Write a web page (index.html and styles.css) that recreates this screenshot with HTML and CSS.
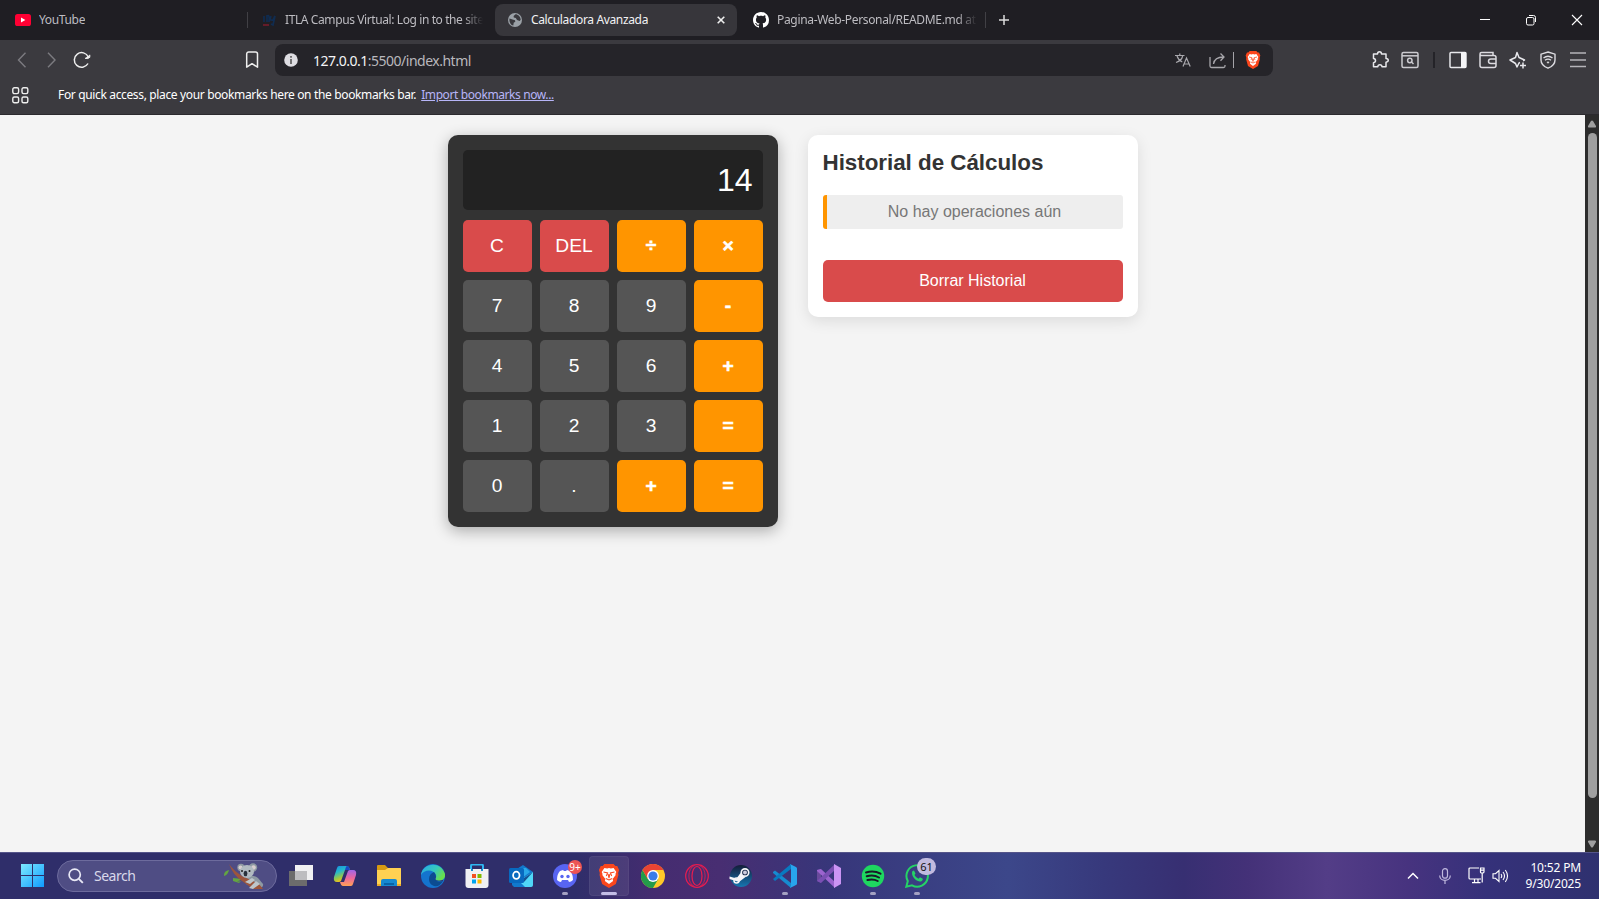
FILE: index.html
```html
<!DOCTYPE html>
<html lang="es">
<head>
<meta charset="utf-8">
<title>Calculadora Avanzada</title>
<link rel="stylesheet" href="styles.css">
</head>
<body>
<div class="desktop">
  <header class="tabs">
    <div class="tab tab-youtube">
      <svg width="16" height="12" viewBox="0 0 16 12"><rect width="16" height="12" rx="2.6" fill="#f03"/><path d="M6 3.4v5.2L10.4 6z" fill="#fff"/></svg>
      <span class="tab-title t-youtube">YouTube</span>
    </div>
    <i class="tab-sep"></i>
    <div class="tab tab-itla">
      <svg width="16" height="14" viewBox="0 0 16 14"><path d="M2 9V3M5 9V2M5 3q3-2 2 6M9 3q-2 5 2 4l2-4-2 9-2-1" fill="none" stroke="#102c50" stroke-width="1.7"/><path d="M1 11h6v2H1z" fill="#641b29"/></svg>
      <span class="tab-title t-itla faded">ITLA Campus Virtual: Log in to the site</span>
    </div>
    <div class="tab tab-active">
      <svg width="14" height="14" viewBox="0 0 14 14"><circle cx="7" cy="7" r="7" fill="#9aa0a6"/><path d="M1.500 5.500 4.500 6.500l2.500.7.300 1.600-1.600 1-.4 2.600C2.500 12 1 9 1.500 5.500zM7.500 1.200 5.600 3l.2 1.500 2 .5L9 7l2.700 1 1-1.200C12.600 3.500 10 1.200 7.500 1.200z" fill="#39383d"/></svg>
      <span class="tab-title t-active">Calculadora Avanzada</span>
      <svg class="tab-close" width="8" height="8" viewBox="0 0 8 8"><path d="m.7.7 6.600 6.600m0-6.600L.7 7.300" stroke="#eee" stroke-width="1.600"/></svg>
    </div>
    <div class="tab tab-github">
      <svg width="16" height="16" viewBox="0 0 16 16"><path fill="#fff" d="M8 0C3.580 0 0 3.580 0 8c0 3.540 2.290 6.530 5.470 7.590.4.070.55-.17.55-.38 0-.19-.01-.82-.01-1.490-2.010.37-2.530-.49-2.690-.94-.09-.23-.48-.94-.82-1.130-.28-.15-.68-.52-.01-.53.63-.01 1.080.58 1.230.82.72 1.210 1.870.87 2.330.66.070-.52.28-.87.510-1.070-1.780-.2-3.640-.89-3.640-3.950 0-.87.310-1.590.82-2.150-.08-.2-.36-1.020.08-2.120 0 0 .67-.21 2.200.82.640-.18 1.320-.27 2-.27s1.360.09 2 .27c1.530-1.040 2.200-.82 2.200-.82.44 1.100.16 1.920.08 2.120.51.56.82 1.270.82 2.150 0 3.070-1.870 3.750-3.650 3.950.29.25.54.73.54 1.480 0 1.070-.01 1.930-.01 2.200 0 .21.15.46.55.38A8.010 8.010 0 0 0 16 8c0-4.420-3.580-8-8-8z"/></svg>
      <span class="tab-title t-github faded">Pagina-Web-Personal/README.md at</span>
    </div>
    <i class="tab-sep"></i>
    <svg class="new-tab" width="10" height="10" viewBox="0 0 10 10"><path d="M5 0v10M0 5h10" stroke="#ddd" stroke-width="1.500"/></svg>
    <div class="window-controls">
      <svg width="12" height="12" viewBox="0 0 12 12"><path d="M1 5.500h10" stroke="#fff"/></svg>
      <svg width="12" height="12" viewBox="0 0 12 12" fill="none" stroke="#fff"><rect x="1.500" y="3.500" width="7.500" height="7.500" rx="1.500"/><path d="M4 1.500h4.500a2 2 0 0 1 2 2V8"/></svg>
      <svg width="12" height="12" viewBox="0 0 12 12"><path d="m1 1 10 10m0-10L1 11" stroke="#fff" stroke-width="1.100"/></svg>
    </div>
  </header>

  <div class="chrome-bars">
    <nav class="toolbar">
      <svg class="nav-back" width="10" height="16" viewBox="0 0 10 16"><path d="M8.500.8 1.500 8l7 7.200" fill="none" stroke="#7c7b80" stroke-width="1.400"/></svg>
      <svg class="nav-fwd" width="10" height="16" viewBox="0 0 10 16"><path d="m1 .8 7 7.200-7 7.200" fill="none" stroke="#7c7b80" stroke-width="1.400"/></svg>
      <svg class="nav-reload" width="18" height="18" viewBox="0 0 18 18"><path d="M15 12.500A7.300 7.300 0 1 1 15.300 6" fill="none" stroke="#eee" stroke-width="1.500"/><path d="M12 7.300q3 1 4.800-1V3.800" fill="#eee" stroke="#eee"/></svg>
      <svg class="nav-mark" width="14" height="18" viewBox="0 0 14 18"><path d="M1.700 16.200V3a2 2 0 0 1 2-2h6.800a2 2 0 0 1 2 2v13.200L7 12.700z" fill="none" stroke="#eee" stroke-width="1.500" stroke-linejoin="round"/></svg>
      <div class="address">
        <svg width="14" height="14" viewBox="0 0 14 14"><circle cx="7" cy="7" r="6.800" fill="#dedde2"/><path d="M6.200 6h1.600v5H6.200zM6.200 3h1.600v1.800H6.200z" fill="#555"/></svg>
        <span class="url"><b>127.0.0.1</b>:5500/index.html</span>
        <svg class="translate" width="16" height="16" viewBox="0 0 16 16" fill="none" stroke="#a8a7ac" stroke-width="1.200"><path d="M0 3.500h9.500M4.800 1.500v2M2 4c1 3 3 5 5.300 6M7.700 4C7 7 4 9.500 1 10.500M8 14.500l3.500-8.500 3.700 8.500M9.300 12h4.700"/></svg>
        <svg class="share" width="17" height="17" viewBox="0 0 17 17" fill="none" stroke="#a8a7ac" stroke-width="1.300"><path d="M1 5v9q0 1.500 1.500 1.500h12q1.500 0 1.500-1.500v-1M4.500 12q1-7 10-7M11.500 1.500 15 5l-3.500 3.700"/></svg>
        <i class="address-sep"></i>
        <svg class="shield" width="16" height="18" viewBox="0 0 24 24" preserveAspectRatio="none"><use href="#brave"/></svg>
      </div>
      <div class="actions">
        <svg width="18" height="18" viewBox="0 0 18 18" fill="none" stroke="#e8e8ec" stroke-width="1.500" stroke-linejoin="round"><path d="M2.500 3h4c0-3 4-3 4 0H15v4.500c3 .2 3 3.500 0 3.700v4.500h-4c-.2-2.500-4-2.500-4.200 0H2.500v-4c2.700-.2 2.700-4 0-4.200z"/></svg>
        <svg width="18" height="18" viewBox="0 0 18 18" fill="none" stroke="#cccbd0" stroke-width="1.500"><rect x="1" y="1.500" width="16" height="15" rx="1.500"/><path d="M1 4.800h16"/><circle cx="8.800" cy="9.500" r="2.200"/><path d="m10.500 11 2 2"/></svg>
        <i class="actions-sep"></i>
        <svg width="18" height="18" viewBox="0 0 18 18"><rect x="1" y="1.500" width="16" height="15" rx="1" fill="none" stroke="#e8e8ec" stroke-width="1.500"/><path d="M12 1h5v16h-5z" fill="#f4f4f6"/></svg>
        <svg width="18" height="18" viewBox="0 0 18 18" fill="none" stroke="#dddce1" stroke-width="1.500"><path d="M1 3.500v11q0 2 2 2h12q2 0 2-2v-8q0-2-2-2H2.500Q1 4.500 1 3t1.500-1.500H14v3M17 8h-5q-2.500 0-2.500 2.200T12 12.500h5"/></svg>
        <svg width="18" height="18" viewBox="0 0 18 18" fill="none" stroke="#e8e8ec" stroke-width="1.500" stroke-linejoin="round"><path d="M11 11.500 10 12l-2 4-1.500-3.500L1 9l5.500-2.500L8 1.500l2 5L15.500 9l-1.500.7M14 11.500v6M11 14.500h6"/></svg>
        <svg width="18" height="18" viewBox="0 0 18 18" fill="none" stroke="#dddce1" stroke-width="1.400"><path d="M9 1 16 3.200V9q0 5.500-7 8.200Q2 14.500 2 9V3.200z"/><path d="M4.500 7q4.500-3.500 9 0M6 9.300q3-2.300 6 0"/><path d="m7.500 11 1.500-.6 1.500.6L9 12.800z" fill="#ddd" stroke="none"/></svg>
        <svg width="18" height="18" viewBox="0 0 18 18"><path d="M1 2h16M1 9h16M1 15.500h16" stroke="#b5b4b9" stroke-width="1.600"/></svg>
      </div>
    </nav>
    <div class="bookmarks">
      <svg width="17" height="17" viewBox="0 0 17 17" fill="none" stroke="#eee" stroke-width="1.400"><rect x=".8" y=".8" width="5.800" height="5.800" rx="1.500"/><rect x="10" y=".8" width="5.800" height="5.800" rx="1.500"/><rect x=".8" y="10" width="5.800" height="5.800" rx="1.500"/><rect x="10" y="10" width="5.800" height="5.800" rx="1.500"/></svg>
      <span class="bm-text">For quick access, place your bookmarks here on the bookmarks bar.</span>
      <a class="bm-link">Import bookmarks now...</a>
    </div>
  </div>

  <div class="viewport">
    <main class="page">
      <section class="calculator">
        <div class="display">14</div>
        <div class="keys">
          <button class="key clear">C</button><button class="key clear">DEL</button><button class="key op">÷</button><button class="key op">×</button>
          <button class="key">7</button><button class="key">8</button><button class="key">9</button><button class="key op">-</button>
          <button class="key">4</button><button class="key">5</button><button class="key">6</button><button class="key op">+</button>
          <button class="key">1</button><button class="key">2</button><button class="key">3</button><button class="key op">=</button>
          <button class="key">0</button><button class="key">.</button><button class="key op">+</button><button class="key op">=</button>
        </div>
      </section>
      <section class="history">
        <h2>Historial de Cálculos</h2>
        <div class="entry">No hay operaciones aún</div>
        <button class="erase">Borrar Historial</button>
      </section>
    </main>
    <div class="scrollbar">
      <svg width="10" height="8" viewBox="0 0 10 8"><path d="M4 1q1-1 2 0l3 5q.5 1.500-1 1.500H2Q.5 7.500 1 6z" fill="#9f9f9f"/></svg>
      <div class="thumb"></div>
      <svg width="10" height="8" viewBox="0 0 10 8"><path d="M4 7q1 1 2 0l3-5q.5-1.500-1-1.500H2Q.5.500 1 2z" fill="#9f9f9f"/></svg>
    </div>
  </div>

  <footer class="taskbar">
    <svg class="start" width="23" height="23" viewBox="0 0 23 23"><defs><linearGradient id="win" x2="1" y2="1" gradientUnits="userSpaceOnUse" gradientTransform="scale(23)"><stop stop-color="#7deaff"/><stop offset="1" stop-color="#0f9bff"/></linearGradient></defs><path d="M0 0h11v11H0zM12 0h11v11H12zM0 12h11v11H0zM12 12h11v11H12z" fill="url(#win)"/></svg>
    <div class="search">
      <svg width="16" height="16" viewBox="0 0 16 16"><circle cx="6.700" cy="6.700" r="5.600" fill="none" stroke="#e8e8f5" stroke-width="1.700"/><path d="m10.800 10.800 4 4" stroke="#e8e8f5" stroke-width="1.900"/></svg>
      <span>Search</span>
      <svg class="koala" width="42" height="26" viewBox="0 0 42 26">
        <path d="M1 12q0-4 5-5-1 5-5 6zM10 15l9 1-5 3 4-1-2 2-6-2z" fill="#63a541"/>
        <path d="M23 14q7-3 12 1l5 6q1 4-5 4l-12-4z" fill="#8d99a3"/>
        <path d="M6 1q5 7 13 12l17 8 4 5H30L19 18Q10 12 6 1z" fill="#9c553c"/>
        <circle cx="18" cy="4.500" r="3.700" fill="#8e99a2"/><circle cx="30" cy="4.500" r="4.200" fill="#8e99a2"/><circle cx="17.500" cy="4.500" r="2" fill="#d9cfd0"/><circle cx="30.500" cy="4.500" r="2.300" fill="#d9cfd0"/>
        <ellipse cx="24" cy="8.500" rx="7" ry="6.500" fill="#b1bac1"/><ellipse cx="22.500" cy="10.500" rx="1.900" ry="2.700" fill="#29313b"/><circle cx="19" cy="8" r="1" fill="#222"/><circle cx="26.500" cy="8" r="1" fill="#222"/>
        <path d="m22 19 7-4 3 2-5 4zM26 25l7-7 4 3-7 5z" fill="#bdc6cb"/>
      </svg>
    </div>
    <div class="apps">
      <div class="app"><svg width="24" height="24" viewBox="0 0 24 24"><path d="M0 7h18v15H0z" fill="#6c6c6c"/><path d="M6 1h18v15H6z" fill="#f0f0f2"/><path d="M6 7h12v9H6z" fill="#bdbdc0"/></svg></div>
      <div class="app"><svg width="24" height="24" viewBox="0 0 24 24"><defs><linearGradient id="cpa" x2=".4" y2="1"><stop stop-color="#168ce5"/><stop offset=".4" stop-color="#25b9cb"/><stop offset=".75" stop-color="#9bc944"/><stop offset="1" stop-color="#ffbd18"/></linearGradient><linearGradient id="cpb" x2="0" y2="1"><stop stop-color="#9f65e8"/><stop offset=".5" stop-color="#ec669e"/><stop offset="1" stop-color="#ffa254"/></linearGradient></defs><path d="M6 2h8q2 0 3 4l-5 0-4 11q-1 1-2 1H4q-4 0-3-5L4 4q.5-2 2-2z" fill="url(#cpa)"/><path d="M14 2q2 0 3 4H12q1-4 2-4z" fill="#1948c5"/><path d="M18 22h-8q-2 0-3-4h4l4-11q1-1 2-1h3q4 0 3 5l-3 9q-.5 2-2 2z" fill="url(#cpb)"/></svg></div>
      <div class="app"><svg width="24" height="24" viewBox="0 0 24 24"><path d="M0 2q0-1 1-1h7l3 3h12q1 0 1 1v3H0z" fill="#d79b12"/><path d="M0 6h8l3-2h12q1 0 1 1v17H0z" fill="#ffd152"/><path d="M0 20h24v2H0z" fill="#edac28"/><path d="M4 22v-5q0-2 2-2h12q2 0 2 2v5z" fill="#1689d1"/><path d="M7 19h10v2H7z" fill="#0864a8"/></svg></div>
      <div class="app"><svg width="24" height="24" viewBox="0 0 24 24"><defs><linearGradient id="ega" x2="1" y2=".5"><stop stop-color="#28a9e8"/><stop offset=".6" stop-color="#36c9bd"/><stop offset="1" stop-color="#67de4e"/></linearGradient></defs><circle cx="12" cy="12" r="12" fill="#1474ce"/><path d="M0 11C1-1 20-4 24 10c1 5-4 8-9 6-2-1 1-2 0-5C13 5 3 5 0 11z" fill="url(#ega)"/><path d="M8 15q0-5 5-7 3 3 1 7 2 4 8 2-5 8-11 4-3-2-3-6z" fill="#0c4c91"/><path d="M15 11q0 4-1 4 1 3 8 2v-1q-6 2-8-1z" fill="#2f2e6b"/></svg></div>
      <div class="app"><svg width="24" height="24" viewBox="0 0 24 24"><path d="M6 7V2q0-1.500 1.500-1.500h9Q18 .5 18 2v5" fill="none" stroke="#2fb7f1" stroke-width="2"/><path d="M.5 5h23v16q0 3-3 3h-17q-3 0-3-3z" fill="#f0f0f3"/><path d="M6 5h2v2H6zM16 5h2v2h-2z" fill="#168bd0"/><path d="M7 10h4v4H7z" fill="#f25022"/><path d="M12.500 10h4v4h-4z" fill="#7fba00"/><path d="M7 15.500h4v4H7z" fill="#00a4ef"/><path d="M12.500 15.500h4v4h-4z" fill="#ffb900"/></svg></div>
      <div class="app"><svg width="24" height="24" viewBox="0 0 24 24"><path d="M3 8 14 1l10 7v13l-2 2H5l-2-2z" fill="#1179cd"/><path d="M8 4h9l4 4-8 6z" fill="#2aa8e8"/><path d="m24 8-14 9 6 6h6q2 0 2-2z" fill="#50d7f7"/><path d="m24 8-12 8 3 2z" fill="#155294"/><rect y="4" width="15" height="15" rx="1.500" fill="#0869bf"/><ellipse cx="7.300" cy="11.300" rx="3.200" ry="3.600" fill="none" stroke="#fff" stroke-width="1.800"/></svg></div>
      <div class="app"><svg width="24" height="24" viewBox="0 0 24 24"><circle cx="12" cy="12" r="12" fill="#5865f2"/><path d="M4 16q0-6 3-9l3-1 1 1h2l1-1 3 1q3 3 3 9-2 2-4 2l-1-2H9l-1 2q-2 0-4-2z" fill="#fff"/><circle cx="9" cy="12.500" r="1.700" fill="#5865f2"/><circle cx="15" cy="12.500" r="1.700" fill="#5865f2"/></svg><span class="badge red">9+</span><i class="dot"></i></div>
      <div class="app current"><svg width="22" height="24" viewBox="0 0 24 24" preserveAspectRatio="none"><g id="brave"><path d="M7 0h10l2 2h2l2 4-1 3 .3 2-2.800 9L12 24l-7.500-4-2.800-9L2 9 1 6l2-4h2z" fill="#fb471d"/><path d="m7 4 3 .5 2-.5 2 .5 3-.5 3 4-1 2 .3 1-3.300 4 .5 2-4.500 3-4.500-3 .5-2-3.300-4 .3-1-1-2z" fill="#fff"/><path d="m6 8 4.500 1L9 12M18 8l-4.500 1 1.500 3M11 10l1 4 1-4M8.500 14.500l3.500 1.500 3.500-1.500" fill="none" stroke="#fb471d" stroke-width="1.100"/></g></svg><i class="dot wide"></i></div>
      <div class="app"><svg width="24" height="24" viewBox="0 0 24 24"><circle cx="12" cy="12" r="12" fill="#ffc928"/><path d="M1.600 6A12 12 0 0 0 12 24l5.200-9H6.800z" fill="#249b4a"/><path d="M1.600 6A12 12 0 0 1 22.400 6H12l-5.200 9z" fill="#e94333"/><circle cx="12" cy="12" r="5.900" fill="#fff"/><circle cx="12" cy="12" r="4.600" fill="#397ce7"/></svg></div>
      <div class="app"><svg width="24" height="24" viewBox="0 0 24 24" fill="none" stroke="#e81c4f" stroke-width="1.200"><circle cx="12" cy="12" r="11.300"/><ellipse cx="12" cy="12" rx="5" ry="9.500"/><path d="M9.500 1.500C2 4 2 20 9.500 22.500M14.500 1.500c7.500 2.500 7.500 18.500 0 21" stroke-width=".8"/></svg></div>
      <div class="app"><svg width="24" height="24" viewBox="0 0 24 24"><defs><linearGradient id="st" x2="0" y2="1"><stop stop-color="#141c38"/><stop offset="1" stop-color="#1677b1"/></linearGradient></defs><circle cx="12" cy="12" r="11" fill="url(#st)"/><path d="m.5 12.500 7 2 4-5.500 5 4-6.500 5L.5 15z" fill="#f5f5f8"/><circle cx="7.500" cy="16.500" r="2.500" fill="none" stroke="#f5f5f8" stroke-width="1.500"/><circle cx="16" cy="8.500" r="3.700" fill="#172747" stroke="#f5f5f8" stroke-width="1.700"/><circle cx="16" cy="8.500" r="2" fill="#ccd"/></svg></div>
      <div class="app"><svg width="24" height="24" viewBox="0 0 24 24"><path d="m0 8 2-1.500L18 19v5L0 9z" fill="#168bd0"/><path d="m0 15 2 2L18 5V0L0 15z" fill="#087ac1"/><path d="m17 0 6 3q1 .5 1 1.500v15q0 1-1 1.500l-6 3q1-1 1-3V3q0-2-1-3z" fill="#28a5ed"/></svg><i class="dot"></i></div>
      <div class="app"><svg width="24" height="24" viewBox="0 0 24 24"><path d="m0 6 4-1v14l-4-2z" fill="#694a9c"/><path d="m0 6 4-1 14 13v6L0 7z" fill="#9c64cf"/><path d="m0 17 4 2L18 6V0L0 17z" fill="#7a4fb3"/><path d="m17 0 7 4v16l-7 4z" fill="#cb94f4"/></svg></div>
      <div class="app"><svg width="24" height="24" viewBox="0 0 24 24"><circle cx="12" cy="12" r="11.200" fill="#1ed760"/><path d="M5 8.500q8-2.300 14.500 1.200M5.700 12.300q6.800-2 12.300 1.200M6.400 16q5.800-1.600 10.300 1" fill="none" stroke="#191927" stroke-width="2" stroke-linecap="round"/></svg><i class="dot"></i></div>
      <div class="app"><svg width="24" height="24" viewBox="0 0 24 24"><path d="m1.300 22.700 1.500-5.600A10.700 10.700 0 1 1 7 21.300z" fill="none" stroke="#25d366" stroke-width="2"/><path d="m7.500 7 1.500-.5 1.500 3-1 1.500q1.500 3 4 3.800l1.500-1.500 2.800 1.400q0 2.800-3 2.800C10 17 5.500 11 7.500 7z" fill="#25d366"/></svg><span class="badge lilac">61</span><i class="dot"></i></div>
    </div>
    <div class="tray">
      <svg class="t-up" width="12" height="8" viewBox="0 0 12 8"><path d="m1 6.500 5-5 5 5" fill="none" stroke="#fff" stroke-width="1.500"/></svg>
      <svg class="t-mic" width="12" height="16" viewBox="0 0 12 16" fill="none" stroke="#c0b9df" stroke-width="1.200"><rect x="3.500" y=".7" width="5" height="9.500" rx="2.500"/><path d="M.7 7.500c0 6.500 10.600 6.500 10.600 0M6 12.500V16"/></svg>
      <svg class="t-net" width="17" height="17" viewBox="0 0 17 17" fill="none" stroke="#fff" stroke-width="1.200"><path d="M11 1H2Q1 1 1 2v9q0 1 1 1h11M6.500 12v3.500M10 12v3.500M4 15.700h8.500M12.500 1h3.500v4q0 1-1.800 1t-1.700-1zM12.500 3.200H16M14.200 6v9.500"/></svg>
      <svg class="t-vol" width="17" height="14" viewBox="0 0 17 14" fill="none" stroke="#fff" stroke-width="1.100"><path d="M1 4.700h2.500L7 1.500v11L3.500 9.300H1zM9 5q1.500 2 0 4M11 3q3 4 0 8M13.300 1q4.400 6 0 12"/></svg>
      <div class="clock"><span class="c-time">10:52 PM</span><span class="c-date">9/30/2025</span></div>
    </div>
  </footer>
</div>
</body>
</html>
```
FILE: styles.css
```css
* { box-sizing: border-box; }
body { margin: 0; overflow: hidden; font-family: "Noto Sans", "Open Sans", sans-serif; }
svg { display: block; flex: none; }
button { border: 0; padding: 0; font-family: "Liberation Sans", Arial, sans-serif; color: #fff; }
.desktop { width: 1599px; height: 899px; display: flex; flex-direction: column; }

/* Tab strip */
.tabs { height: 40px; flex: none; background: #1f1e23; display: flex; align-items: center; color: #bdbcc1; font-size: 12px; }
.tab { height: 32px; display: flex; align-items: center; flex: none; border-radius: 8px; }
.tab-title { white-space: nowrap; overflow: hidden; flex: none; padding-bottom: 1px; letter-spacing: -.35px; }
.tab-youtube { width: 247px; padding-left: 15px; gap: 8px; }
.tab-itla { width: 247px; padding-left: 14px; gap: 7px; }
.tab-active { width: 242px; padding: 0 12px 0 13px; gap: 9px; background: #37363b; color: #f2f2f4; }
.tab-github { width: 248px; padding-left: 16px; gap: 8px; }
.t-itla { width: 198px; letter-spacing: -.4px; }
.t-github { width: 200px; letter-spacing: -.33px; }
.faded { -webkit-mask-image: linear-gradient(90deg, #000 90%, transparent); mask-image: linear-gradient(90deg, #000 90%, transparent); }
.tab-close { margin-left: auto; }
.tab-sep { width: 1px; height: 16px; background: #414045; flex: none; }
.new-tab { margin-left: 13px; }
.window-controls { margin-left: auto; display: flex; gap: 34px; padding-right: 16px; }

/* Toolbar and bookmarks */
.chrome-bars { height: 75px; flex: none; background: #3b3a3f; border-bottom: 1px solid #2b2a2e; }
.toolbar { height: 40px; display: flex; align-items: center; }
.nav-back { margin-left: 17px; }
.nav-fwd { margin-left: 20px; }
.nav-reload { margin-left: 16px; }
.nav-mark { margin-left: 154px; }
.address { width: 998px; height: 32px; margin-left: 16px; border-radius: 8px; background: #252429; display: flex; align-items: center; padding: 0 12px 0 9px; }
.url { margin-left: 15px; font-size: 14px; color: #b9b8bd; white-space: nowrap; letter-spacing: -.5px; }
.url b { font-weight: 400; color: #f4f4f6; }
.translate { margin-left: auto; }
.share { margin-left: 18px; }
.address-sep { width: 1px; height: 16px; background: #a4a3a8; margin: 0 11px 0 7px; }
.actions { margin-left: auto; padding-right: 12px; display: flex; align-items: center; gap: 12px; }
.actions-sep { width: 2px; height: 16px; margin: 0 2px; background: #242328; }
.bookmarks { height: 31px; display: flex; align-items: center; padding-left: 12px; font-size: 12px; color: #fff; white-space: nowrap; }
.bm-text { margin-left: 29px; padding-bottom: 2px; letter-spacing: -.35px; }
.bm-link { margin-left: 5px; padding-bottom: 2px; color: #b7b5f8; text-decoration: underline; letter-spacing: -.4px; }

/* Page */
.viewport { flex: 1; display: flex; min-height: 0; }
.page { flex: 1; background: #f4f4f4; display: flex; justify-content: center; align-items: flex-start; gap: 30px; padding-top: 20px; font-family: "Liberation Sans", Arial, sans-serif; }
.calculator { width: 330px; padding: 15px; border-radius: 10px; background: #333; box-shadow: 0 4px 15px rgba(0, 0, 0, .3); }
.display { height: 60px; border-radius: 5px; background: #222; color: #fff; font-size: 32px; line-height: 60px; text-align: right; padding-right: 10px; margin-bottom: 10px; }
.keys { display: grid; grid-template-columns: repeat(4, 1fr); grid-auto-rows: 52px; gap: 8px; }
.key { padding-bottom: 1px; border-radius: 5px; background: #555; font-size: 19.2px; }
.key.clear { background: #d94b4b; }
.key.op { background: #ff9500; font-weight: 700; -webkit-text-stroke: .6px #fff; }
.history { width: 330px; height: 182px; padding: 14px 15px 15px; border-radius: 10px; background: #fff; box-shadow: 0 4px 15px rgba(0, 0, 0, .1); }
.history h2 { margin: 0 0 19px; font-size: 22.4px; line-height: 27px; color: #333; letter-spacing: -.03px; }
.entry { height: 34px; border-left: 4px solid #ff9500; border-radius: 3px; background: #eee; color: #777; font-size: 16px; line-height: 34px; text-align: center; }
.erase { display: block; width: 100%; height: 42px; margin-top: 31px; border-radius: 5px; background: #d94b4b; font-size: 16px; }

.scrollbar { width: 14px; background: #2c2c2c; display: flex; flex-direction: column; align-items: center; padding: 5px 0 4px; }
.thumb { width: 9px; height: 665px; margin: 5px 0 auto; border-radius: 5px; background: #9f9f9f; }

/* Taskbar */
.taskbar { height: 47px; flex: none; display: flex; align-items: center; padding-bottom: 1px; border-top: 1px solid #55558a; background: linear-gradient(90deg, #2f2e6a 0, #2f2e6a 36%, #452c70 41%, #482e72 45%, #37367a 52%, #3c478a 63%, #37397c 69%, #372f72 74%, #443178 78%, #533d87 83%, #47337f 88%, #35317a 93%, #2f316f 100%); color: #fff; }
.start { margin-left: 21px; }
.search { width: 220px; height: 32px; margin-left: 13px; padding: 0 11px 0 10px; border: 1px solid #6d6b9d; border-radius: 16px; background: #4f4d84; display: flex; align-items: center; color: #d9d8ea; font-size: 14px; }
.search span { margin-left: 10px; letter-spacing: -.5px; }
.koala { margin-left: auto; }
.apps { display: flex; gap: 4px; margin-left: 4px; }
.app { width: 40px; height: 40px; border-radius: 4px; display: flex; align-items: center; justify-content: center; position: relative; }
.app.current { background: rgba(255, 255, 255, .08); border: 1px solid rgba(255, 255, 255, .05); }
.dot { position: absolute; bottom: 1px; left: 17px; width: 6px; height: 3px; border-radius: 2px; background: #a4a1c2; }
.dot.wide { left: 11px; bottom: 0; width: 16px; background: #c3bde6; }
.badge { position: absolute; display: flex; align-items: center; justify-content: center; font-size: 10px; line-height: 1; }
.badge.red { top: 4px; right: 3px; width: 14px; height: 14px; border-radius: 7px; background: #ed5454; color: #fff; }
.badge.lilac { top: 2px; right: 1px; width: 19px; height: 17px; border-radius: 9px; background: #c1badf; color: #111; font-size: 11px; }
.tray { margin-left: auto; padding-right: 18px; display: flex; align-items: center; }
.t-mic { margin-left: 20px; }
.t-net { margin-left: 17px; }
.t-vol { margin-left: 7px; margin-right: 1px; }
.clock { width: 71px; display: flex; flex-direction: column; align-items: flex-end; font-size: 12px; line-height: 16px; white-space: nowrap; letter-spacing: -.17px; }
```
